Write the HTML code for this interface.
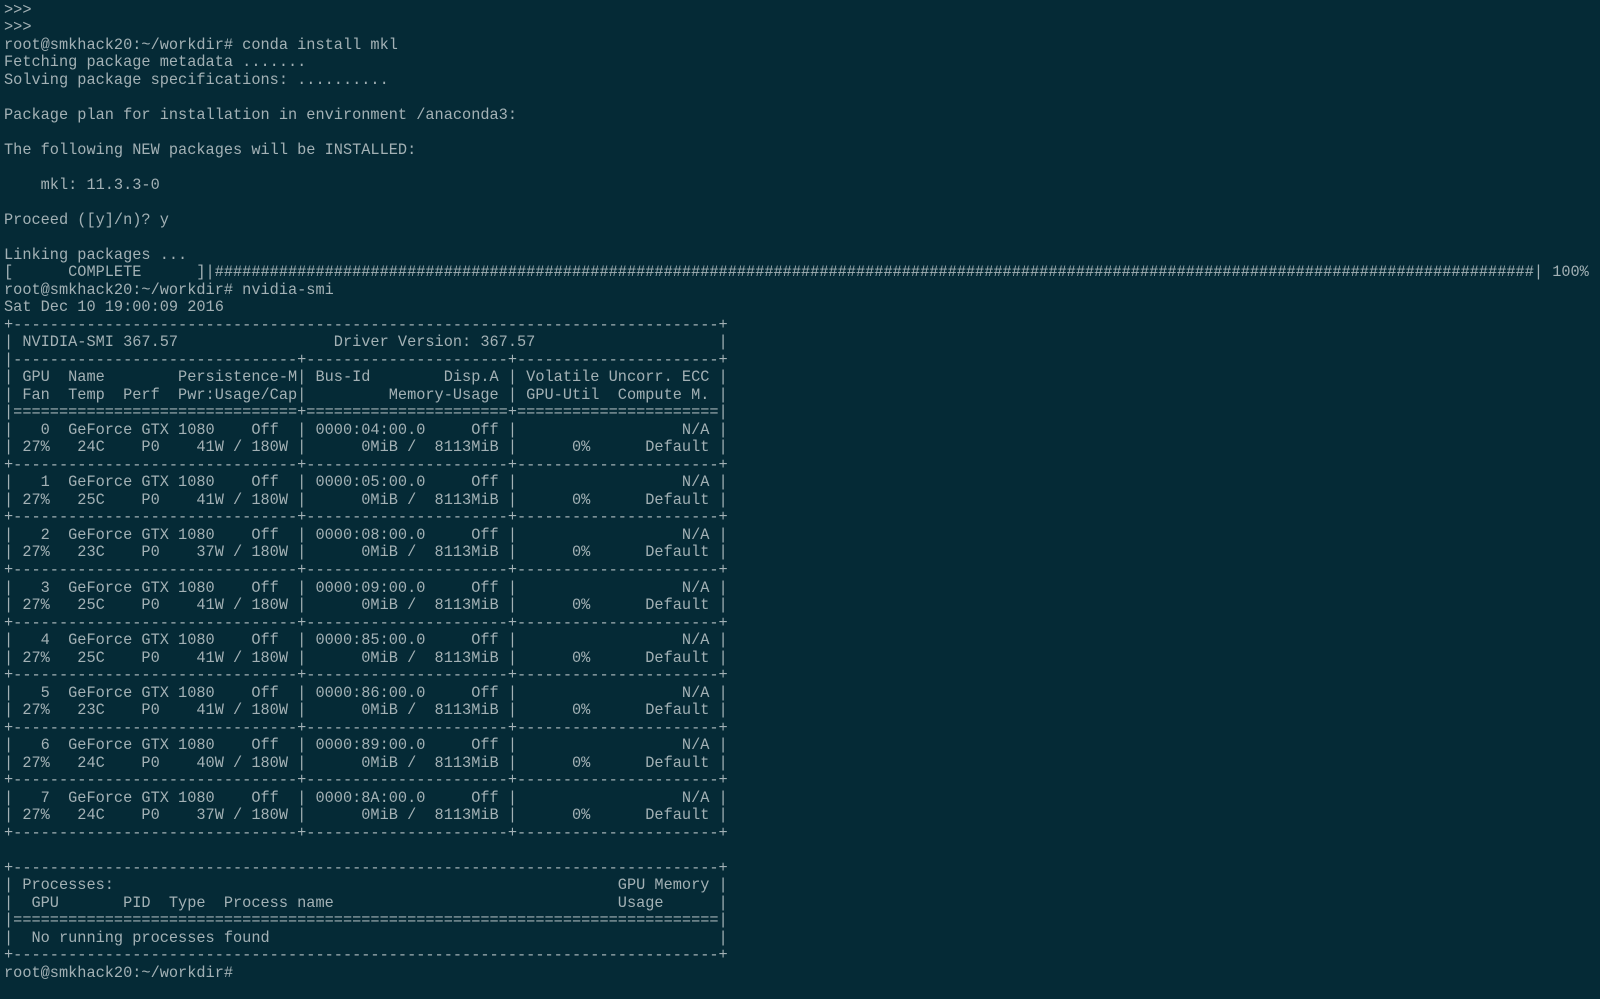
<!DOCTYPE html>
<html><head><meta charset="utf-8"><style>
html,body{margin:0;padding:0;background:#052a36;width:1600px;height:999px;overflow:hidden}
pre{margin:0;padding:1.5px 0 0 4px;font-family:"Liberation Mono",monospace;font-size:15.28px;line-height:17.52px;color:#a3b1b5;white-space:pre}
</style></head><body><pre>&gt;&gt;&gt;
&gt;&gt;&gt;
root@smkhack20:~/workdir# conda install mkl
Fetching package metadata .......
Solving package specifications: ..........

Package plan for installation in environment /anaconda3:

The following NEW packages will be INSTALLED:

    mkl: 11.3.3-0

Proceed ([y]/n)? y

Linking packages ...
[      COMPLETE      ]|################################################################################################################################################| 100%
root@smkhack20:~/workdir# nvidia-smi
Sat Dec 10 19:00:09 2016
+-----------------------------------------------------------------------------+
| NVIDIA-SMI 367.57                 Driver Version: 367.57                    |
|-------------------------------+----------------------+----------------------+
| GPU  Name        Persistence-M| Bus-Id        Disp.A | Volatile Uncorr. ECC |
| Fan  Temp  Perf  Pwr:Usage/Cap|         Memory-Usage | GPU-Util  Compute M. |
|===============================+======================+======================|
|   0  GeForce GTX 1080    Off  | 0000:04:00.0     Off |                  N/A |
| 27%   24C    P0    41W / 180W |      0MiB /  8113MiB |      0%      Default |
+-------------------------------+----------------------+----------------------+
|   1  GeForce GTX 1080    Off  | 0000:05:00.0     Off |                  N/A |
| 27%   25C    P0    41W / 180W |      0MiB /  8113MiB |      0%      Default |
+-------------------------------+----------------------+----------------------+
|   2  GeForce GTX 1080    Off  | 0000:08:00.0     Off |                  N/A |
| 27%   23C    P0    37W / 180W |      0MiB /  8113MiB |      0%      Default |
+-------------------------------+----------------------+----------------------+
|   3  GeForce GTX 1080    Off  | 0000:09:00.0     Off |                  N/A |
| 27%   25C    P0    41W / 180W |      0MiB /  8113MiB |      0%      Default |
+-------------------------------+----------------------+----------------------+
|   4  GeForce GTX 1080    Off  | 0000:85:00.0     Off |                  N/A |
| 27%   25C    P0    41W / 180W |      0MiB /  8113MiB |      0%      Default |
+-------------------------------+----------------------+----------------------+
|   5  GeForce GTX 1080    Off  | 0000:86:00.0     Off |                  N/A |
| 27%   23C    P0    41W / 180W |      0MiB /  8113MiB |      0%      Default |
+-------------------------------+----------------------+----------------------+
|   6  GeForce GTX 1080    Off  | 0000:89:00.0     Off |                  N/A |
| 27%   24C    P0    40W / 180W |      0MiB /  8113MiB |      0%      Default |
+-------------------------------+----------------------+----------------------+
|   7  GeForce GTX 1080    Off  | 0000:8A:00.0     Off |                  N/A |
| 27%   24C    P0    37W / 180W |      0MiB /  8113MiB |      0%      Default |
+-------------------------------+----------------------+----------------------+

+-----------------------------------------------------------------------------+
| Processes:                                                       GPU Memory |
|  GPU       PID  Type  Process name                               Usage      |
|=============================================================================|
|  No running processes found                                                 |
+-----------------------------------------------------------------------------+
root@smkhack20:~/workdir# </pre></body></html>
